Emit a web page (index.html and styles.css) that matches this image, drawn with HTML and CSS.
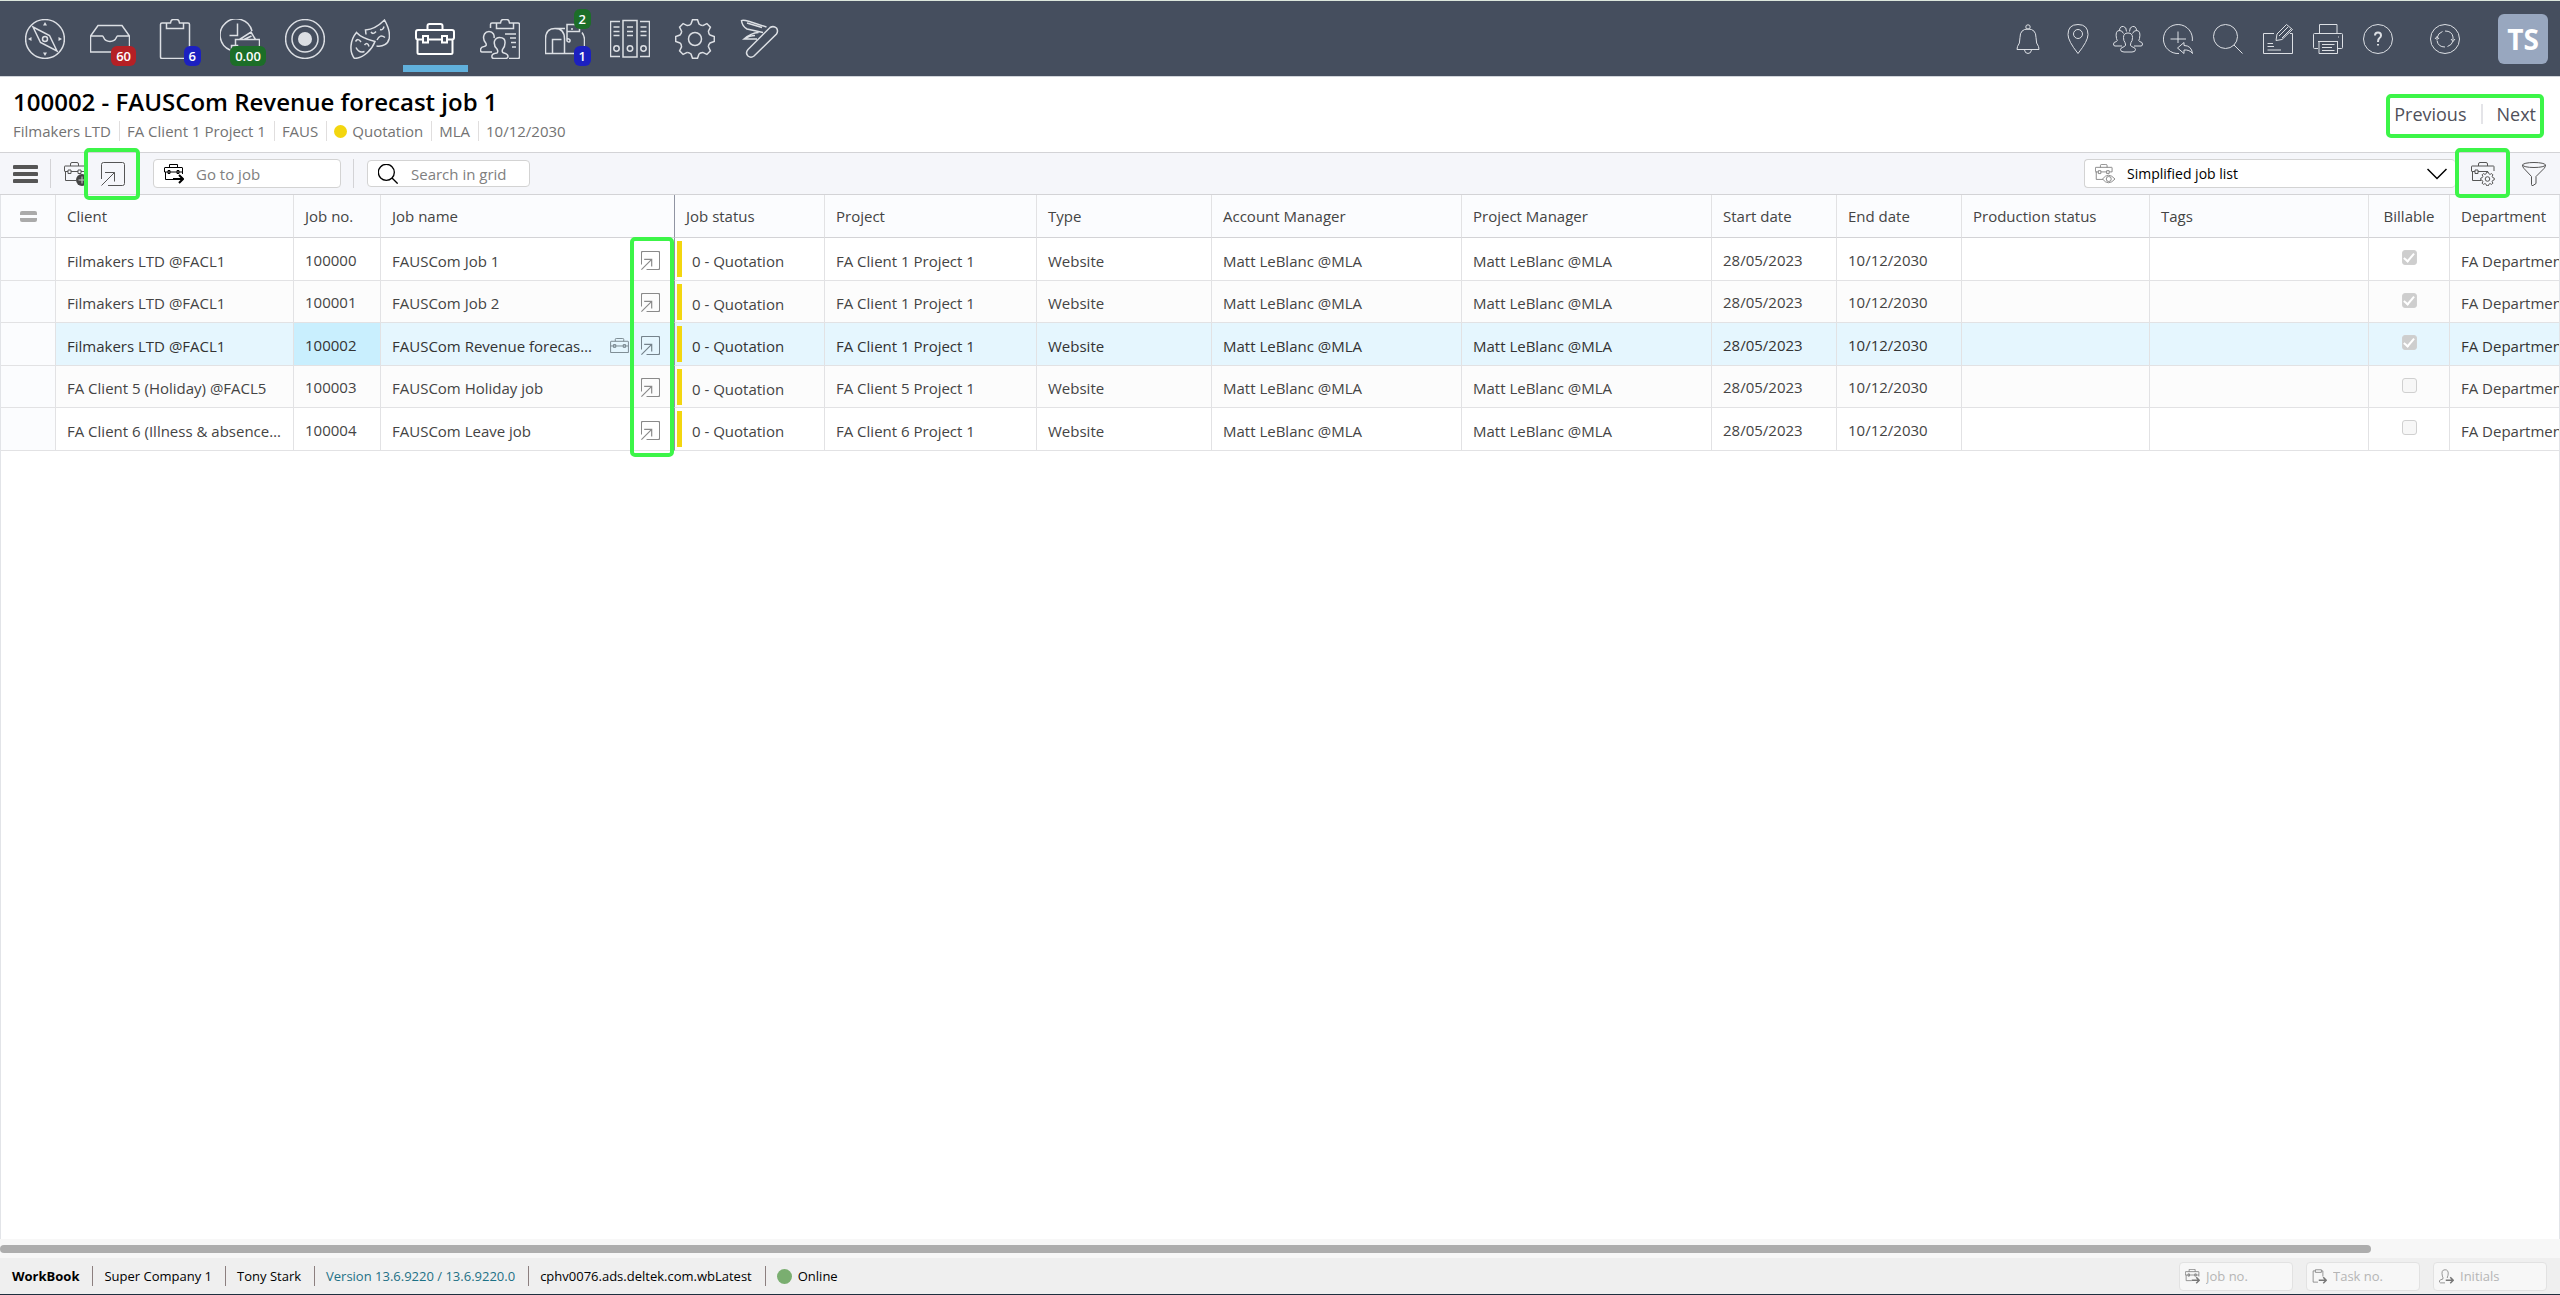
FILE: index.html
```html
<!DOCTYPE html>
<html lang="en">
<head>
<meta charset="utf-8">
<title>WorkBook - Jobs</title>
<link rel="stylesheet" href="styles.css">
</head>
<body>
<svg class="sprite" aria-hidden="true">
  <defs>
    <g id="gear-segment"><path vector-effect="non-scaling-stroke" d="M-4-15L-2.500-19.300H2.500L4-15Q6-13.200 7.800-13.400"/></g>
    <g id="gear-ring">
      <use href="#gear-segment"/><use href="#gear-segment" transform="rotate(45)"/><use href="#gear-segment" transform="rotate(90)"/><use href="#gear-segment" transform="rotate(135)"/><use href="#gear-segment" transform="rotate(180)"/><use href="#gear-segment" transform="rotate(225)"/><use href="#gear-segment" transform="rotate(270)"/><use href="#gear-segment" transform="rotate(315)"/>
      <circle vector-effect="non-scaling-stroke" r="6.500"/>
    </g>
    <symbol id="open" viewBox="0 0 24 24"><path d="M.5 17V2.500Q.5.5 2.500.5H21.500Q23.500.5 23.500 2.500V21.500Q23.500 23.500 21.500 23.500H7M.5 23.500L13.500 10.500M4 10.500H13.500V19.500"/></symbol>
    <symbol id="case" viewBox="0 0 20 16"><path d="M1 3.500H19Q19.500 3.500 19.500 4V8.500H.5V4Q.5 3.500 1 3.500ZM.5 8.500V15.500H19.500V8.500M5.500 3.500V1.500Q5.500.5 6.500.5H13.500Q14.500.5 14.500 1.500V3.500M3.500 7h2.500v3h-2.500zM14 7h2.500v3h-2.500z"/></symbol>
    <symbol id="case-part" viewBox="0 0 24 24"><path d="M12 18.500H1.500V9M.5 9V4.500Q.5 4 1 4H20Q20.500 4 20.500 4.500V9.500M.5 9.500H4M7 9.500H14M17 9.500H20.500M6.500 4V2Q6.500.5 8 .5H13Q14.500.5 14.500 2V4M4 8h3v3.500h-3zM14 8h3v3.500h-3z"/></symbol>
    <symbol id="search" viewBox="0 0 30 30"><circle cx="12.500" cy="12.500" r="12"/><path d="M21 21L29.500 29.500"/></symbol>
    <symbol id="case-go" viewBox="0 0 20 20"><path d="M9 15.500H1.500V8M.5 8V4Q.5 3.500 1 3.500H18Q18.500 3.500 18.500 4V10M.5 8H18.500M5.500 3.500V.5H13.500V3.500M4 6.500h2v3h-2zM13 6.500h2v3h-2z"/><path stroke-width="2" d="M9 15H19M15 11L19 15L15 19"/></symbol>
  </defs>
</svg>

<header class="topbar">
  <nav class="modules" aria-label="Modules">
    <button class="module" aria-label="Navigator"><svg viewBox="0 0 40 40"><circle cx="20" cy="20" r="19.400"/><path d="M8 8L24.500 16.500L32 32L15.500 23.500Z"/><circle cx="20" cy="20" r="2.500"/><path class="solid" d="M18 6.500L20 3L22 6.500ZM18 33.500L20 37L22 33.500ZM6.500 18L3 20L6.500 22ZM33.500 18L37 20L33.500 22Z"/></svg></button>
    <button class="module" aria-label="Inbox"><svg viewBox="0 0 40 40"><path d="M8 6.500H32L39.500 17V33H.5V17ZM.5 17H12.500C14 17 13 22.500 20 22.500S26 17 27.500 17H39.500"/></svg><span class="badge red">60</span></button>
    <button class="module" aria-label="Tasks"><svg viewBox="0 0 40 40"><path d="M11 4H7Q5.500 4 5.500 5.500V38Q5.500 39.500 7 39.500H33Q34.500 39.500 34.500 38V5.500Q34.500 4 33 4H29M11.500 9.500V4H15.500Q16 .5 18 .5H22Q24 .5 24.500 4H28.500V9.500Z"/></svg><span class="badge blue">6</span></button>
    <button class="module" aria-label="Time sheet"><svg viewBox="0 0 40 40"><path d="M10 31A16.200 16.200 0 1 1 32 12M17.500 4.500V16.500H9.500M39.500 32V20.500H15.500V33.500M19.500 20.500L31 13L35.500 20.500M24 20.500L31.500 17M11.500 26.500H17.500V33.500H11.500Z"/></svg><span class="badge green">0.00</span></button>
    <button class="module" aria-label="Focus"><svg viewBox="0 0 40 40"><circle cx="20" cy="20" r="19.400"/><circle cx="20" cy="20" r="13"/><circle class="solid" cx="20" cy="20" r="7"/></svg></button>
    <button class="module" aria-label="Roles"><svg viewBox="0 0 40 40"><path d="M6.500 13.500C10 17.500 17 20.500 25 22.500C22 30.500 14 39 4.500 39.500C-1 33 0 21 6.500 13.500ZM5.500 22.500Q8 18.500 11 23M14.500 26Q17.500 22.500 19 27.500M6 28.500Q9 34.500 14.500 32.500M16 15.500L15.500 11C23 10.500 29 6.500 34.500 1C38.500 8 40 15 39.200 19.500C38 25 33 28 26.500 27M21 13Q23 16 26 12.500M30 10.500Q33 11.500 34 7.500M27 21Q30 14.500 35 18.500"/></svg></button>
    <button class="module active" aria-label="Jobs"><svg viewBox="0 0 40 40"><path d="M8 20.500H3Q1 20.500 1 18.500V13Q1 11 3 11H37Q39 11 39 13V18.500Q39 20.500 37 20.500H32M13 20.500H27M2.500 20.500V33.500Q2.500 35 4 35H36Q37.500 35 37.500 33.500V20.500M12.500 11V7Q12.500 5 14.500 5H25.500Q27.500 5 27.500 7V11M8 17h5v6.500h-5zM27 17h5v6.500h-5z"/></svg></button>
    <button class="module" aria-label="Resources"><svg viewBox="0 0 40 40"><path d="M16 4H12Q10.500 4 10.500 5.500V9M29 39.500H38Q39.500 39.500 39.500 38V5.500Q39.500 4 38 4H33M16.500 9.500V4H20.500Q21 .5 23 .5H27Q29 .5 29.500 4H33.500V9.500ZM25 15H36M30 19H36M31 23.500H36M32 28H36M12 33H2Q.5 33 .5 31Q.5 28 4 27.500Q7 27 6 24.500Q2 20 4.500 15Q6 12.500 9 12.500T13.500 15Q14.500 17 14 19M17 39.500H14Q11.500 39.500 12 36.500Q12.500 34.500 17 34Q18.500 32.500 17 30Q13.500 27 14.500 22Q16 18.500 19.500 18.500Q25.500 18.500 25 24Q25 28 22.500 30.500Q21.500 33.500 24 34Q28 35 28 37.500Q28 39.500 25 39.500Z"/></svg></button>
    <button class="module" aria-label="Mailbox"><svg viewBox="0 0 40 40"><path d="M.5 34.500V20Q.5 9.500 10 9.500T19.500 20V34.500ZM10 9.500H20M26 10H28M39.500 27V20Q39 16 37 13.500M19.500 34.500H30M7.500 34V20.500H16.500M22 13.500V5.500H34.500V12.500H22V19.500Q25.500 20 25 22T22 22V13.500"/></svg><span class="badge green top">2</span><span class="badge blue">1</span></button>
    <button class="module" aria-label="Archive"><svg viewBox="0 0 40 40"><path d="M10 2.500H.5V37.500H10M30 2.500H39.500V37.500H30M13 1.500H27V38H13ZM3.500 8H9.500M3.500 12.500H9.500M3.500 16.500H9.500M17 8H23M17 12.500H23M17 16.500H23M30.500 8H36.500M30.500 12.500H36.500M30.500 16.500H36.500"/><circle cx="6.500" cy="29.500" r="2.700"/><circle cx="20" cy="29.500" r="2.700"/><circle cx="33.500" cy="29.500" r="2.700"/></svg></button>
    <button class="module" aria-label="Settings"><svg viewBox="0 0 40 40"><use href="#gear-ring" x="20" y="20"/></svg></button>
    <button class="module" aria-label="Tools"><svg viewBox="0 0 40 40"><path d="M8 30.500L30 8.500Q33.500 6.500 36.500 9Q38.500 12 36.500 15L14 37Q11 39.500 8 37Q5 34 8 30.500ZM26.500 8L9.500 2.500Q3 .5 1.500 1.500Q2 7 7 10L23 13.500M7 4L22 8.500M18.500 13.500Q11 14 4 20H17M4 20Q10 16.500 15 16.500"/></svg></button>
  </nav>
  <div class="tools">
    <button class="tool" aria-label="Notifications"><svg viewBox="0 0 30 30"><circle cx="15" cy="3" r="2.200"/><path d="M15 5Q7 5 7 13.500Q7 20 4.500 22.500L4 25.500H26L25.500 22.500Q23 20 23 13.500Q23 5 15 5ZM11.500 26Q12 29.500 15 29.500T18.500 26"/></svg></button>
    <button class="tool" aria-label="Location"><svg viewBox="0 0 30 30"><path d="M15 29.500Q5 17 5 10.500Q5 .5 15 .5T25 10.500Q25 17 15 29.500Z"/><circle cx="15" cy="10" r="4.500"/></svg></button>
    <button class="tool" aria-label="People"><svg viewBox="0 0 30 30"><path d="M11 28Q7.500 28 7.500 25.500Q7.500 23.500 11.500 22.500Q13.500 21.500 12 18.500Q10.500 17 10.500 13.500Q10.500 9 15 9T19.500 13.500Q19.500 17 18 18.500Q16.500 21.500 18.500 22.500Q22.500 23.500 22.500 25.500Q22.500 28 19 28ZM9 22H2Q.5 22 .5 20Q.5 18 3.500 17.500Q5 17 3.500 14.500Q2 7 6 6.500Q9 6 10.500 9.500M21 22H28Q29.500 22 29.500 20Q29.500 18 26.500 17.500Q25 17 26.500 14.500Q28 7 24 6.500Q21 6 19.500 9.500M6.500 6Q7 2 10.500 2.500Q13.500 3 13.500 7.500M23.500 6Q23 2 19.500 2.500Q16.500 3 16.500 7.500"/></svg></button>
    <button class="tool" aria-label="Create"><svg viewBox="0 0 30 30"><path d="M16 29.500A14.500 14.500 0 1 1 29.300 17M15 7.500V19M7.500 15H23M14.500 24L21 18.500V21.500Q28.500 21.500 29.500 29.500Q26.500 25.500 21 26V29.500Z"/></svg></button>
    <button class="tool" aria-label="Search"><svg><use href="#search"/></svg></button>
    <button class="tool" aria-label="Notes"><svg viewBox="0 0 30 30"><path d="M11 9.500H.5V29.500H29.500V9.500H27M4.500 19.500H10M4.500 22.500H11M4.500 26H18M14 10L23.500.5L29.500 5.500L19 15.500L13 16.500ZM16 12L25 3M19 14L28 5"/></svg></button>
    <button class="tool" aria-label="Print"><svg viewBox="0 0 30 30"><path d="M6.500 9V.5H24V9M5 24.500H1.500Q.5 24.500.5 23.500V10.500Q.5 9.500 1.500 9.500H28.500Q29.500 9.500 29.500 10.500V23.500Q29.500 24.500 28.500 24.500H25M5 17.500H25M6 17.500V29.500H24.500V17.500M9 20.500H21.500M9 23.500H19M9 26.500H21.500M25 13h1"/></svg></button>
    <button class="tool" aria-label="Help"><svg viewBox="0 0 30 30"><circle cx="15" cy="15" r="14.500"/><path class="thick" d="M12 11.500Q12 8.500 15 8.500T18 11.500Q18 13 16.500 14T15 18M15 20v1.500"/></svg></button>
    <button class="tool refresh" aria-label="Refresh"><svg viewBox="0 0 30 30"><circle cx="15" cy="15" r="14.500"/><path d="M7 16V14Q8 9 12.500 7.500M15 7Q22 7 23 13V16.500M23 17Q22 21 17.500 22.500M15 23Q8 23 7 16.500M5 15L7 12.500L9 15M21 15L23 17.500L25 15"/></svg></button>
    <button class="avatar">TS</button>
  </div>
</header>

<section class="jobhead">
  <div>
    <h1>100002 - FAUSCom Revenue forecast job 1</h1>
    <ul class="facts">
      <li>Filmakers LTD</li><li>FA Client 1 Project 1</li><li>FAUS</li><li class="state"><span class="dot yellow"></span>Quotation</li><li>MLA</li><li>10/12/2030</li>
    </ul>
  </div>
  <nav class="pager marked" aria-label="Job paging"><a href="#previous">Previous</a><a href="#next">Next</a></nav>
</section>

<div class="toolbar">
  <button class="bar-button burger" aria-label="Menu"><svg viewBox="0 0 25 20"><path d="M1.500 3H23.500M1.500 10H23.500M1.500 17H23.500"/></svg></button>
  <span class="rule"></span>
  <button class="bar-button add" aria-label="New job"><svg viewBox="0 0 24 24"><use href="#case-part"/><circle class="plus" cx="18" cy="18" r="6"/><path class="plus-sign" d="M18 14.500V21.500M14.500 18H21.500"/></svg></button>
  <button class="bar-button open-job marked" aria-label="Open job"><svg><use href="#open"/></svg></button>
  <div class="field goto"><svg><use href="#case-go"/></svg><input type="text" placeholder="Go to job" aria-label="Go to job"></div>
  <span class="rule"></span>
  <div class="field find"><svg><use href="#search"/></svg><input type="text" placeholder="Search in grid" aria-label="Search in grid"></div>
  <div class="field view">
    <svg viewBox="0 0 24 24"><use href="#case-part"/><g class="eye"><path d="M9 18Q16 9 24 18Q16 27 9 18Z"/><circle cx="16.500" cy="18" r="3"/></g></svg>
    <select aria-label="Job list view"><option>Simplified job list</option></select>
    <svg class="chevron" viewBox="0 0 20 12"><path d="M.5 1L10 10.500L19.500 1"/></svg>
  </div>
  <button class="bar-button list-setup marked" aria-label="List settings"><svg viewBox="0 0 24 24"><path d="M10 18.500H1.500V9.500M.5 9V4.500Q.5 4 1 4H22.500Q23 4 23 4.500V9M.5 9.500H4M7 9.500H17M7.500 4V2Q7.500.5 9 .5H15Q16.500.5 16.500 2V4M4 8h3v3.500h-3z"/><use href="#gear-ring" transform="translate(16.500 17) scale(.35)"/></svg></button>
  <button class="bar-button filter" aria-label="Filter"><svg viewBox="0 0 24 24"><ellipse cx="12" cy="3" rx="11.500" ry="2.500"/><path d="M.5 3Q.5 5 2 6.500L9.500 14.500V22.500Q9.500 24 11 23.500L14 21.500V14.500L22 6.500Q23.500 5 23.500 3"/></svg></button>
</div>

<main class="grid">
  <table>
    <colgroup><col class="w-handle"><col class="w-client"><col class="w-no"><col class="w-name"><col class="w-status"><col class="w-project"><col class="w-type"><col class="w-manager"><col class="w-manager"><col class="w-date"><col class="w-date"><col class="w-production"><col class="w-tags"><col class="w-billable"><col></colgroup>
    <thead><tr><th class="handle"><button aria-label="Grid menu"></button></th><th>Client</th><th>Job no.</th><th class="frozen">Job name</th><th>Job status</th><th>Project</th><th>Type</th><th>Account Manager</th><th>Project Manager</th><th>Start date</th><th>End date</th><th>Production status</th><th>Tags</th><th class="center">Billable</th><th>Department</th></tr></thead>
    <tbody>
      <tr><td class="handle"></td><td>Filmakers LTD @FACL1</td><td class="num">100000</td><td class="frozen"><div class="name"><span>FAUSCom Job 1</span><button aria-label="Open FAUSCom Job 1"><svg class="go"><use href="#open"/></svg></button></div></td><td class="status"><div>0 - Quotation</div></td><td>FA Client 1 Project 1</td><td>Website</td><td>Matt LeBlanc @MLA</td><td>Matt LeBlanc @MLA</td><td class="num">28/05/2023</td><td class="num">10/12/2030</td><td></td><td></td><td class="center"><input type="checkbox" disabled checked aria-label="Billable"></td><td>FA Department</td></tr>
      <tr><td class="handle"></td><td>Filmakers LTD @FACL1</td><td class="num">100001</td><td class="frozen"><div class="name"><span>FAUSCom Job 2</span><button aria-label="Open FAUSCom Job 2"><svg class="go"><use href="#open"/></svg></button></div></td><td class="status"><div>0 - Quotation</div></td><td>FA Client 1 Project 1</td><td>Website</td><td>Matt LeBlanc @MLA</td><td>Matt LeBlanc @MLA</td><td class="num">28/05/2023</td><td class="num">10/12/2030</td><td></td><td></td><td class="center"><input type="checkbox" disabled checked aria-label="Billable"></td><td>FA Department</td></tr>
      <tr class="selected"><td class="handle"></td><td>Filmakers LTD @FACL1</td><td class="num current">100002</td><td class="frozen"><div class="name"><span>FAUSCom Revenue forecast job 1</span><button aria-label="Job card"><svg class="card"><use href="#case"/></svg></button><button aria-label="Open FAUSCom Revenue forecast job 1"><svg class="go"><use href="#open"/></svg></button></div></td><td class="status"><div>0 - Quotation</div></td><td>FA Client 1 Project 1</td><td>Website</td><td>Matt LeBlanc @MLA</td><td>Matt LeBlanc @MLA</td><td class="num">28/05/2023</td><td class="num">10/12/2030</td><td></td><td></td><td class="center"><input type="checkbox" disabled checked aria-label="Billable"></td><td>FA Department</td></tr>
      <tr><td class="handle"></td><td>FA Client 5 (Holiday) @FACL5</td><td class="num">100003</td><td class="frozen"><div class="name"><span>FAUSCom Holiday job</span><button aria-label="Open FAUSCom Holiday job"><svg class="go"><use href="#open"/></svg></button></div></td><td class="status"><div>0 - Quotation</div></td><td>FA Client 5 Project 1</td><td>Website</td><td>Matt LeBlanc @MLA</td><td>Matt LeBlanc @MLA</td><td class="num">28/05/2023</td><td class="num">10/12/2030</td><td></td><td></td><td class="center"><input type="checkbox" disabled aria-label="Billable"></td><td>FA Department</td></tr>
      <tr><td class="handle"></td><td>FA Client 6 (Illness &amp; absence) @FACL6</td><td class="num">100004</td><td class="frozen"><div class="name"><span>FAUSCom Leave job</span><button aria-label="Open FAUSCom Leave job"><svg class="go"><use href="#open"/></svg></button></div></td><td class="status"><div>0 - Quotation</div></td><td>FA Client 6 Project 1</td><td>Website</td><td>Matt LeBlanc @MLA</td><td>Matt LeBlanc @MLA</td><td class="num">28/05/2023</td><td class="num">10/12/2030</td><td></td><td></td><td class="center"><input type="checkbox" disabled aria-label="Billable"></td><td>FA Department</td></tr>
    </tbody>
  </table>
  <div class="column-mark"></div>
</main>
<div class="scroller"><div class="thumb"></div></div>

<footer class="statusbar">
  <ul>
    <li><strong>WorkBook</strong></li><li>Super Company 1</li><li>Tony Stark</li><li><a href="#version">Version 13.6.9220 / 13.6.9220.0</a></li><li>cphv0076.ads.deltek.com.wbLatest</li><li class="online"><span class="dot ok"></span>Online</li>
  </ul>
  <div class="quick">
    <div class="field"><svg><use href="#case-go"/></svg><input type="text" placeholder="Job no." aria-label="Job no."></div>
    <div class="field"><svg viewBox="0 0 20 20"><path d="M8 17.500H1.500V2.500H4.500M12.500 2.500H14.500V10M4.500 4.500V1H12.500V4.500Z"/><path stroke-width="2" d="M9 15H19M15 11L19 15L15 19"/></svg><input type="text" placeholder="Task no." aria-label="Task no."></div>
    <div class="field"><svg viewBox="0 0 20 20"><path d="M8 18.500H2Q.5 18 .5 16Q1 14 5 13.500Q6 12 4.500 9.500Q2.500 1 8 1T12 8.500Q11 11 11 12"/><path stroke-width="2" d="M9 15H19M15 11L19 15L15 19"/></svg><input type="text" placeholder="Initials" aria-label="Initials"></div>
  </div>
</footer>
</body>
</html>
```
FILE: styles.css
```css
*, *::after { box-sizing: border-box; }

body {
  margin: 0;
  min-height: 100vh;
  display: flex;
  flex-direction: column;
  overflow-x: hidden;
  border-top: 1px solid #dce6dc;
  border-bottom: 1px solid #1f2f3f;
  background: #fff;
  color: #444;
  font: 15px/20px "Open Sans", sans-serif;
}

svg { display: block; fill: none; stroke: currentColor; stroke-width: 1; }
button { padding: 0; border: 0; background: none; color: inherit; font: inherit; }
input, select { font: inherit; color: inherit; }
ul { margin: 0; padding: 0; list-style: none; display: flex; }
.sprite { position: absolute; width: 0; height: 0; }

.marked::after,
.column-mark {
  content: "";
  position: absolute;
  border: 4px solid #3cf548;
  border-radius: 5px;
  pointer-events: none;
  z-index: 1;
}

/* Module bar */
.topbar {
  display: flex;
  justify-content: space-between;
  height: 76px;
  padding: 0 12px 0 13px;
  background: #454e5e;
  border-bottom: 1px solid #d0d4da;
  color: #dcdfe4;
}
.modules, .tools { display: flex; }
.module {
  position: relative;
  width: 65px;
  height: 71px;
  padding: 18px 12px 13px;
}
.module svg { width: 40px; height: 40px; stroke-width: 1.500; }
.module.active { color: #fff; border-bottom: 7px solid #60b0dc; padding-bottom: 6px; }
.module.active svg { stroke-width: 2; }
.solid { fill: currentColor; stroke: none; }
.badge {
  position: absolute;
  right: 7px;
  top: 45px;
  padding: 0 5px;
  border-radius: 6px;
  color: #fff;
  font-size: 13px;
  font-weight: 600;
  line-height: 20px;
}
.badge.top { top: 8px; }
.red { background: #b52025; }
.blue { background: #1c20c0; }
.green { background: #1c6e28; }

.tools { align-items: center; }
.tool { width: 50px; padding: 0 10px; }
.tool svg { width: 30px; height: 30px; }
.thick { stroke-width: 2; }
.refresh { width: 67px; padding: 0 10px 0 27px; }
.avatar {
  width: 50px;
  height: 50px;
  margin-left: 28px;
  border-radius: 6px;
  background: #98a7bf;
  color: #fff;
  font-size: 28px;
  font-weight: 700;
}

/* Job heading */
.jobhead {
  display: flex;
  justify-content: space-between;
  height: 76px;
  padding: 9px 12px 0 13px;
  border-bottom: 1px solid #d3d3d6;
}
h1 { margin: 0; color: #000; font-size: 24px; line-height: 32px; font-weight: 600; }
.facts { padding-top: 3px; color: #737373; font-size: 15px; }
.facts li + li { margin-left: 8px; padding-left: 7px; border-left: 1px solid #e0dede; }
.dot { display: inline-block; border-radius: 50%; }
.yellow { width: 13px; height: 13px; margin-right: 5px; background: #f3d60f; }
.state { display: flex; align-items: center; }
.pager { position: relative; align-self: flex-start; display: flex; padding: 18px 12px 0 0; font-size: 18px; line-height: 20px; }
.pager a { color: #50505a; text-decoration: none; }
.pager a + a { margin-left: 14px; padding-left: 14px; border-left: 2px solid #e4e4e8; }
.pager::after { left: -8px; right: 4px; top: 8px; height: 44px; }

/* Toolbar */
.toolbar {
  display: flex;
  align-items: center;
  height: 42px;
  padding: 0 14px 0 13px;
  background: #f5f6fa;
  border-bottom: 1px solid #d3d3d6;
  color: #555;
}
.bar-button { position: relative; }
.bar-button svg { width: 24px; height: 24px; }
.burger svg { width: 25px; height: 20px; stroke-width: 4; stroke-linecap: round; }
.rule { width: 1px; height: 29px; margin: 0 13px 0 12px; background: #d3d3d6; }
.plus { fill: #444; stroke: none; }
.plus-sign { stroke: #ccc; }
.open-job { margin: 0 28px 0 13px; }
.open-job::after { left: -17px; top: -14px; width: 56px; height: 52px; }
.field {
  display: flex;
  align-items: center;
  height: 29px;
  padding: 0 8px;
  border: 1px solid #d3d3d3;
  border-radius: 4px;
  background: #fff;
}
.field svg { flex: none; width: 20px; height: 20px; }
.field input { flex: 1; min-width: 0; padding: 0; border: 0; outline: 0; background: none; }
.field input::placeholder { color: #808080; }
.goto { width: 188px; padding-left: 10px; color: #000; }
.goto input { margin-left: 12px; }
.find { width: 163px; height: 27px; padding-left: 10px; color: #000; }
.find svg { stroke-width: 2; }
.find input { margin-left: 13px; }
.view { width: 371px; margin-left: auto; padding: 0 8px 0 10px; color: #000; border-right: 0; font-size: 14px; }
.view svg:first-child { width: 20px; height: 22px; color: #777; }
.view select { flex: 1; min-width: 0; padding: 0 0 0 12px; border: 0; background: none; appearance: none; line-height: 20px; }
.view .chevron { width: 20px; height: 12px; stroke-width: 1.500; }
.eye { fill: #fff; }
.list-setup { margin: 0 27px 0 16px; }
.list-setup::after { left: -16px; top: -14px; width: 55px; height: 50px; }

/* Job grid */
.grid {
  position: relative;
  flex: 1;
  border: solid #e2e4e8;
  border-width: 0 1px;
}
table { width: 100%; table-layout: fixed; border-collapse: separate; border-spacing: 0; }
.w-handle { width: 55px; }
.w-client { width: 238px; }
.w-no { width: 87px; }
.w-name { width: 294px; }
.w-status { width: 150px; }
.w-project { width: 212px; }
.w-type { width: 175px; }
.w-manager { width: 250px; }
.w-date { width: 125px; }
.w-production { width: 188px; }
.w-tags { width: 219px; }
.w-billable { width: 81px; }
th, td {
  height: 43px;
  padding: 0 11px;
  border: solid #e2e2e4;
  border-width: 0 1px 1px 0;
  overflow: hidden;
  text-align: left;
  white-space: nowrap;
  text-overflow: ellipsis;
  vertical-align: middle;
}
th { background: #fbfcfe; border-bottom-color: #d3d3d6; font-weight: 400; }
td { padding-top: 4px; }
th:last-child, td:last-child { border-right: 0; padding-right: 0; text-overflow: clip; }
td.num { padding-top: 2px; }
tbody tr:nth-child(even) td { height: 42px; padding-top: 3px; background: #fcfcfc; }
tbody tr:nth-child(even) td.num { padding-top: 1px; }
tbody td.handle, tbody tr:nth-child(even) td.handle { background: #fbfcfe; }
.handle { padding: 0 19px; }
.handle button { display: block; width: 17px; height: 11px; border: solid #aaa; border-width: 4px 0; border-radius: 2px; }
th.frozen, td.frozen { border-right-color: #9094a2; padding-right: 14px; }
.selected td { background: #e5f6fe; color: #333; }
.selected td.current { background: #c9effe; }
.name { display: flex; align-items: center; }
.name span { flex: 1; overflow: hidden; text-overflow: ellipsis; }
.name button { margin-left: 12px; padding-bottom: 2px; color: #8a8a8a; }
.selected .name button { color: #75838c; }
.selected .name button:first-of-type { margin-left: 17px; }
.go { width: 19px; height: 19px; stroke-width: 1.500; }
.card { width: 19px; height: 15px; }
tbody tr td.status, tbody tr:nth-child(even) td.status { padding: 0 2px; }
.status div { border-left: 5px solid #f3d60f; padding: 10px 0 6px 10px; }
th.center, td.center, tbody tr:nth-child(even) td.center { text-align: center; padding: 0; }
.center input {
  display: block;
  appearance: none;
  width: 15px;
  height: 15px;
  margin: 0 auto 3px;
  border: 1px solid #d0d0d0;
  border-radius: 3px;
  background: #f7f7f7;
}
.center input:checked { background: #cecece; }
.center input:checked::after {
  content: "";
  display: block;
  width: 6px;
  height: 11px;
  margin: 0 auto;
  border: solid #fff;
  border-width: 0 2px 2px 0;
  transform: rotate(40deg);
}
.column-mark { left: 629px; top: 42px; width: 44px; height: 220px; }

.scroller { height: 19px; padding: 6px 0; background: #f7f7f7; }
.thumb { width: 92.600%; height: 8px; border-radius: 4px; background: #adadad; }

/* Status bar */
.statusbar {
  display: flex;
  align-items: center;
  justify-content: space-between;
  height: 36px;
  padding: 0 13px 0 12px;
  background: #efefef;
  color: #000;
  font-size: 13px;
}
.statusbar li + li { margin-left: 13px; padding-left: 11px; border-left: 1px solid #8c7f7f; }
.statusbar a { color: #1d7186; text-decoration: none; }
.statusbar .online { display: flex; align-items: center; }
.ok { width: 15px; height: 15px; margin-right: 6px; background: #7aae70; }
.quick { display: flex; gap: 13px; }
.quick .field { width: 114px; padding: 0 5px; border-color: #e2e2e2; background: #f7f7f7; color: #777; }
.quick svg { width: 15px; height: 15px; }
.quick input { margin-left: 6px; }
.quick input::placeholder { color: #b5b5b5; }
```
